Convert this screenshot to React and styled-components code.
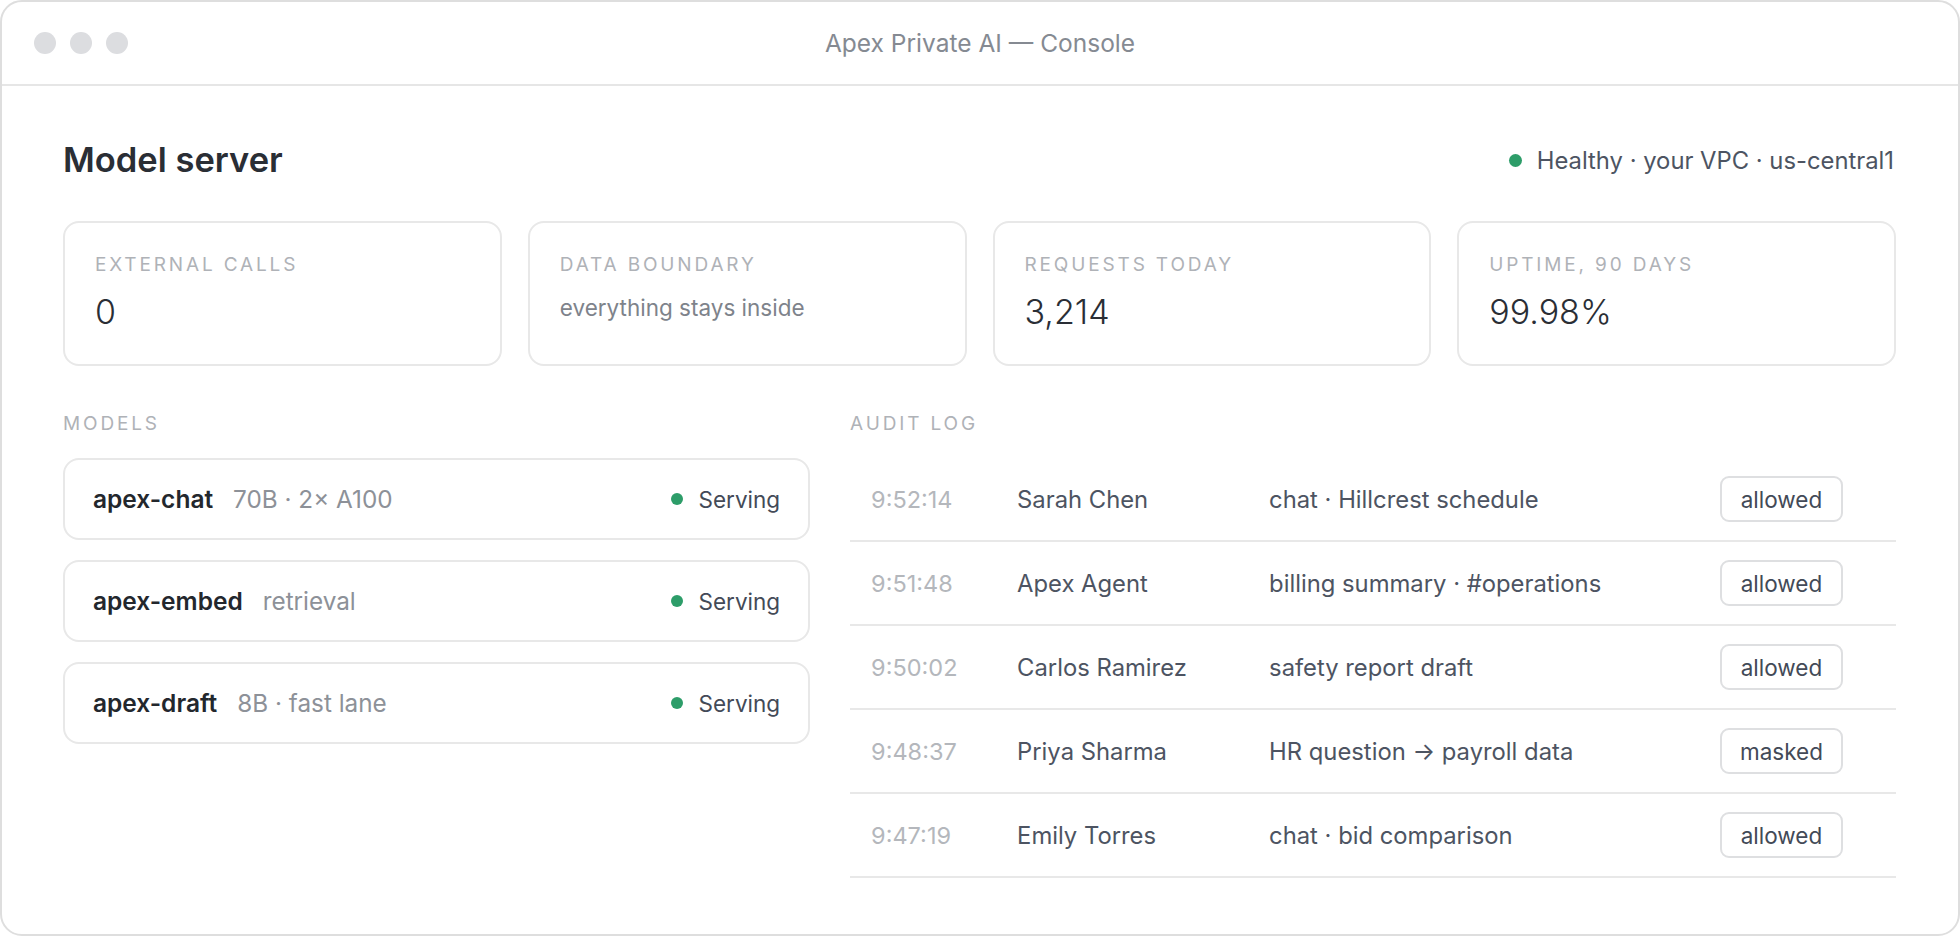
import React from "react";
import styled, { createGlobalStyle } from "styled-components";

const FONT = `Inter, "Noto Sans", sans-serif`;

const GlobalStyle = createGlobalStyle`
  html, body {
    margin: 0;
    padding: 0;
    background: #ffffff;
  }
  body {
    font-family: ${FONT};
    -webkit-font-smoothing: antialiased;
  }
  * {
    box-sizing: border-box;
  }
`;

const Window = styled.div`
  height: 936px;
  border: 2px solid #dedede;
  border-radius: 22px;
  background: #fff;
  overflow: hidden;
  display: flex;
  flex-direction: column;
`;

const TitleBar = styled.div`
  height: 84px;
  flex-shrink: 0;
  border-bottom: 2px solid #e6e6e6;
  display: grid;
  grid-template-columns: 1fr auto 1fr;
  align-items: center;
  padding: 0 32px;
`;

const Lights = styled.div`
  display: flex;
  gap: 14px;
`;

const Light = styled.span`
  width: 22px;
  height: 22px;
  border-radius: 50%;
  background: #dcdde0;
`;

const WindowTitle = styled.div`
  font-size: 24.5px;
  color: #858a92;
`;

const Content = styled.div`
  padding: 52px 62px 0 61px;
  display: flex;
  flex-direction: column;
`;

const Header = styled.div`
  display: flex;
  align-items: center;
  justify-content: space-between;
`;

const Heading = styled.h1`
  margin: 0;
  font-size: 34.5px;
  line-height: 44px;
  font-weight: 600;
  color: #2a2e35;
`;

const Health = styled.div`
  display: flex;
  align-items: center;
  gap: 15px;
  font-size: 23.8px;
  color: #4d5462;
  margin-right: 2px;
`;

const Dot = styled.span`
  width: ${(p) => p.size || 12}px;
  height: ${(p) => p.size || 12}px;
  border-radius: 50%;
  background: #2d9d69;
  flex-shrink: 0;
`;

const Stats = styled.div`
  margin-top: 39px;
  display: grid;
  grid-template-columns: repeat(4, 1fr);
  gap: 26px;
`;

const StatCard = styled.div`
  height: 145px;
  border: 2px solid #e8e8e8;
  border-radius: 16px;
  padding: 31px 30px 0 30px;
`;

const Label = styled.div`
  font-size: 19px;
  line-height: 22px;
  letter-spacing: 0.15em;
  text-transform: uppercase;
  color: #afb2b7;
`;

const StatValue = styled.div`
  margin-top: ${(p) => (p.small ? "19px" : "15px")};
  font-size: ${(p) => (p.small ? "22.5px" : "34px")};
  line-height: ${(p) => (p.small ? "26px" : "42px")};
  font-weight: ${(p) => (p.small ? 400 : 300)};
  color: ${(p) => (p.small ? "#7e838b" : "#2a2e35")};
`;

const Columns = styled.div`
  margin-top: 47px;
  display: grid;
  grid-template-columns: 5fr 7fr;
  gap: 40px;
  align-items: start;
`;

const Section = styled.div`
  display: flex;
  flex-direction: column;
`;

const SectionLabel = styled(Label)`
  margin-bottom: 23px;
`;

const ModelList = styled.div`
  display: flex;
  flex-direction: column;
  gap: 20px;
`;

const ModelCard = styled.div`
  height: 82px;
  border: 2px solid #e8e8e8;
  border-radius: 16px;
  padding: 0 28px 0 28px;
  display: flex;
  align-items: center;
  justify-content: space-between;
`;

const ModelInfo = styled.div`
  display: flex;
  align-items: baseline;
  gap: 20px;
`;

const ModelName = styled.span`
  font-size: 24.5px;
  font-weight: 600;
  color: #23272d;
`;

const ModelMeta = styled.span`
  font-size: 24.3px;
  color: #8d9198;
`;

const Status = styled.div`
  display: flex;
  align-items: center;
  gap: 16px;
  font-size: 22.5px;
  color: #434a57;
`;

const LogTable = styled.div`
  display: flex;
  flex-direction: column;
`;

const LogRow = styled.div`
  height: 84px;
  border-bottom: 2px solid #e8e8e8;
  display: grid;
  grid-template-columns: 146px 252px 1fr 156px;
  align-items: center;
  padding: 0 20px 0 21px;
  font-size: 23.8px;
  color: #4d5462;
`;

const Time = styled.span`
  font-size: 23.5px;
  color: #b4b7bc;
`;

const Badge = styled.span`
  justify-self: start;
  width: 123px;
  height: 46px;
  border: 2px solid #dedfe1;
  border-radius: 9px;
  display: flex;
  align-items: center;
  justify-content: center;
  font-size: 22.5px;
  color: #434a57;
`;

const stats = [
  { label: "External calls", value: "0" },
  { label: "Data boundary", value: "everything stays inside", small: true },
  { label: "Requests today", value: "3,214" },
  { label: "Uptime, 90 days", value: "99.98%" },
];

const models = [
  { name: "apex-chat", meta: "70B · 2× A100" },
  { name: "apex-embed", meta: "retrieval" },
  { name: "apex-draft", meta: "8B · fast lane" },
];

const log = [
  { time: "9:52:14", who: "Sarah Chen", what: "chat · Hillcrest schedule", result: "allowed" },
  { time: "9:51:48", who: "Apex Agent", what: "billing summary · #operations", result: "allowed" },
  { time: "9:50:02", who: "Carlos Ramirez", what: "safety report draft", result: "allowed" },
  { time: "9:48:37", who: "Priya Sharma", what: "HR question → payroll data", result: "masked" },
  { time: "9:47:19", who: "Emily Torres", what: "chat · bid comparison", result: "allowed" },
];

const App = () => {
  return (
    <>
      <GlobalStyle />
      <Window>
        <TitleBar>
          <Lights>
            <Light />
            <Light />
            <Light />
          </Lights>
          <WindowTitle>Apex Private AI — Console</WindowTitle>
          <div />
        </TitleBar>
        <Content>
          <Header>
            <Heading>Model server</Heading>
            <Health>
              <Dot size={13} />
              Healthy · your VPC · us-central1
            </Health>
          </Header>

          <Stats>
            {stats.map((s) => (
              <StatCard key={s.label}>
                <Label>{s.label}</Label>
                <StatValue small={s.small}>{s.value}</StatValue>
              </StatCard>
            ))}
          </Stats>

          <Columns>
            <Section>
              <SectionLabel>Models</SectionLabel>
              <ModelList>
                {models.map((m) => (
                  <ModelCard key={m.name}>
                    <ModelInfo>
                      <ModelName>{m.name}</ModelName>
                      <ModelMeta>{m.meta}</ModelMeta>
                    </ModelInfo>
                    <Status>
                      <Dot />
                      Serving
                    </Status>
                  </ModelCard>
                ))}
              </ModelList>
            </Section>
            <Section>
              <SectionLabel>Audit log</SectionLabel>
              <LogTable>
                {log.map((r) => (
                  <LogRow key={r.time}>
                    <Time>{r.time}</Time>
                    <span>{r.who}</span>
                    <span>{r.what}</span>
                    <Badge>{r.result}</Badge>
                  </LogRow>
                ))}
              </LogTable>
            </Section>
          </Columns>
        </Content>
      </Window>
    </>
  );
};

export default App;
